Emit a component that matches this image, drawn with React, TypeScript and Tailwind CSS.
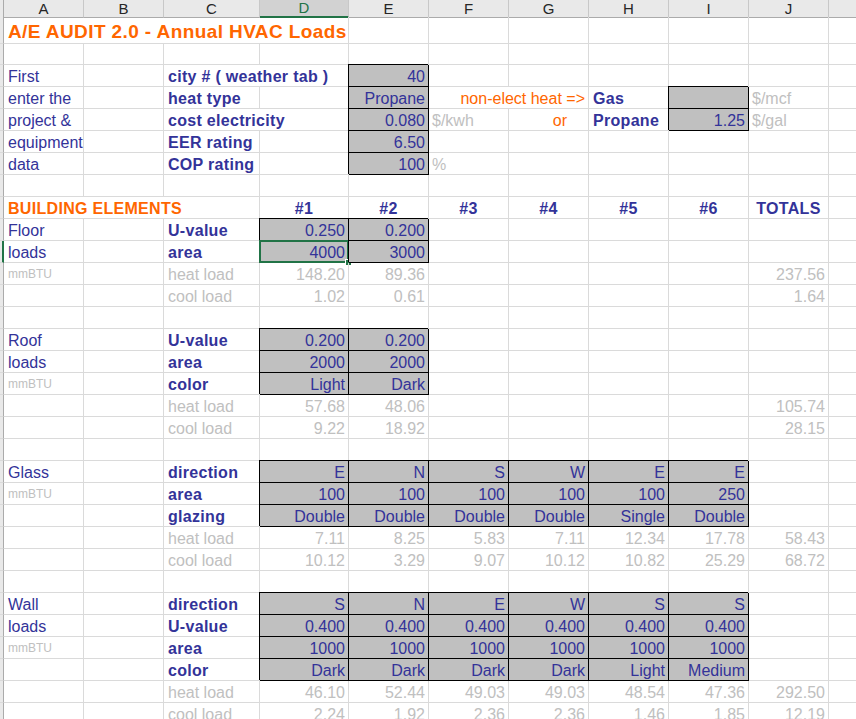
import React from "react";

type Kind =
  | "lbl"
  | "bold"
  | "head"
  | "orange"
  | "or"
  | "orangeB"
  | "title"
  | "unit"
  | "gray"
  | "num"
  | "small"
  | "input";

interface Cell {
  t?: string;
  k: Kind;
  span?: number;
  sel?: boolean;
}

interface Row {
  h: string;
  cells: Record<string, Cell>;
  mark?: boolean;
}

const COLS = ["A", "B", "C", "D", "E", "F", "G", "H", "I", "J", "K"];
const GROUP = ["D", "E", "F", "G", "H", "I"];
const GRID = "grid grid-cols-[4px_80px_80px_96px_89px_80px_80px_80px_80px_80px_80px_80px]";

const kindClass: Record<Kind, string> = {
  lbl: "justify-start pl-[4px] text-[#333399]",
  bold: "justify-start pl-[4px] font-bold tracking-[0.3px] text-[#333399]",
  head: "justify-center font-bold tracking-[0.3px] text-[#333399]",
  orange: "justify-end pr-[3px] text-[#ff6600]",
  or: "justify-end pr-[21px] text-[#ff6600]",
  orangeB: "justify-start pl-[4px] font-bold tracking-[0.3px] text-[#ff6600]",
  title: "justify-start pl-[4px] pb-[2px] text-[19px] font-bold tracking-[0.4px] text-[#ff6600]",
  unit: "justify-start pl-[3px] text-[#c0c0c0]",
  gray: "justify-start pl-[4px] text-[#c0c0c0]",
  num: "justify-end pr-[3px] text-[#c0c0c0]",
  small: "justify-start pl-[4px] pb-[1px] text-[12px] text-[#c0c0c0]",
  input: "justify-end pr-[3px] bg-[#c0c0c0] text-[#333399] shadow-[-1px_-1px_0_0_#000]",
};

const grp = (k: Kind, vals: string[]): Record<string, Cell> =>
  Object.fromEntries(vals.map((v, i) => [GROUP[i], { t: v, k }]));

const R = (cells: Record<string, Cell>, extra?: Partial<Row>): Row => ({
  h: "h-[22px]",
  cells,
  ...extra,
});

const L = (t: string): Cell => ({ t, k: "lbl" });
const B = (t: string): Cell => ({ t, k: "bold" });
const G = (t: string): Cell => ({ t, k: "gray" });
const S: Cell = { t: "mmBTU", k: "small" };

const rows: Row[] = [
  { h: "h-[27px]", cells: { A: { t: "A/E AUDIT 2.0 - Annual HVAC Loads", k: "title", span: 4 } } },
  { h: "h-[21px]", cells: {} },
  R({ A: L("First"), C: { t: "city # ( weather tab )", k: "bold", span: 2 }, E: { t: "40", k: "input" } }),
  R({
    A: L("enter the"),
    C: B("heat type"),
    E: { t: "Propane", k: "input" },
    F: { t: "non-elect heat =>", k: "orange", span: 2 },
    H: B("Gas"),
    I: { t: "", k: "input" },
    J: { t: "$/mcf", k: "unit" },
  }),
  R({
    A: L("project &"),
    C: { t: "cost electricity", k: "bold", span: 2 },
    E: { t: "0.080", k: "input" },
    F: { t: "$/kwh", k: "unit" },
    G: { t: "or", k: "or" },
    H: B("Propane"),
    I: { t: "1.25", k: "input" },
    J: { t: "$/gal", k: "unit" },
  }),
  R({ A: L("equipment"), C: B("EER rating"), E: { t: "6.50", k: "input" } }),
  R({ A: L("data"), C: B("COP rating"), E: { t: "100", k: "input" }, F: { t: "%", k: "unit" } }),
  R({}),
  R({
    A: { t: "BUILDING ELEMENTS", k: "orangeB", span: 3 },
    ...grp("head", ["#1", "#2", "#3", "#4", "#5", "#6"]),
    J: { t: "TOTALS", k: "head" },
  }),
  // floor
  R({ A: L("Floor"), C: B("U-value"), ...grp("input", ["0.250", "0.200"]) }),
  R(
    { A: L("loads"), C: B("area"), D: { t: "4000", k: "input", sel: true }, E: { t: "3000", k: "input" } },
    { mark: true }
  ),
  R({ A: S, C: G("heat load"), ...grp("num", ["148.20", "89.36"]), J: { t: "237.56", k: "num" } }),
  R({ C: G("cool load"), ...grp("num", ["1.02", "0.61"]), J: { t: "1.64", k: "num" } }),
  R({}),
  // roof
  R({ A: L("Roof"), C: B("U-value"), ...grp("input", ["0.200", "0.200"]) }),
  R({ A: L("loads"), C: B("area"), ...grp("input", ["2000", "2000"]) }),
  R({ A: S, C: B("color"), ...grp("input", ["Light", "Dark"]) }),
  R({ C: G("heat load"), ...grp("num", ["57.68", "48.06"]), J: { t: "105.74", k: "num" } }),
  R({ C: G("cool load"), ...grp("num", ["9.22", "18.92"]), J: { t: "28.15", k: "num" } }),
  R({}),
  // glass
  R({ A: L("Glass"), C: B("direction"), ...grp("input", ["E", "N", "S", "W", "E", "E"]) }),
  R({ A: S, C: B("area"), ...grp("input", ["100", "100", "100", "100", "100", "250"]) }),
  R({ C: B("glazing"), ...grp("input", ["Double", "Double", "Double", "Double", "Single", "Double"]) }),
  R({
    C: G("heat load"),
    ...grp("num", ["7.11", "8.25", "5.83", "7.11", "12.34", "17.78"]),
    J: { t: "58.43", k: "num" },
  }),
  R({
    C: G("cool load"),
    ...grp("num", ["10.12", "3.29", "9.07", "10.12", "10.82", "25.29"]),
    J: { t: "68.72", k: "num" },
  }),
  R({}),
  // wall
  R({ A: L("Wall"), C: B("direction"), ...grp("input", ["S", "N", "E", "W", "S", "S"]) }),
  R({ A: L("loads"), C: B("U-value"), ...grp("input", ["0.400", "0.400", "0.400", "0.400", "0.400", "0.400"]) }),
  R({ A: S, C: B("area"), ...grp("input", ["1000", "1000", "1000", "1000", "1000", "1000"]) }),
  R({ C: B("color"), ...grp("input", ["Dark", "Dark", "Dark", "Dark", "Light", "Medium"]) }),
  R({
    C: G("heat load"),
    ...grp("num", ["46.10", "52.44", "49.03", "49.03", "48.54", "47.36"]),
    J: { t: "292.50", k: "num" },
  }),
  R({
    C: G("cool load"),
    ...grp("num", ["2.24", "1.92", "2.36", "2.36", "1.46", "1.85"]),
    J: { t: "12.19", k: "num" },
  }),
];

const spanClass: Record<number, string> = {
  1: "",
  2: "col-span-2",
  3: "col-span-3",
  4: "col-span-4",
};

const SheetRow = ({ row }: { row: Row }) => {
  const out: React.ReactNode[] = [];
  let skip = 0;
  COLS.forEach((col) => {
    if (skip > 0) {
      skip--;
      return;
    }
    const cell = row.cells[col];
    const span = cell?.span ?? 1;
    skip = span - 1;
    const isInput = cell?.k === "input";
    out.push(
      <div
        key={col}
        className={`relative flex items-end whitespace-nowrap border-r border-b leading-[18px] ${
          isInput ? "border-black" : "border-[#dadada]"
        } ${spanClass[span]} ${cell ? kindClass[cell.k] : ""}`}
      >
        {cell?.t}
        {cell?.sel && (
          <>
            <div className="absolute -left-[1px] -top-[1px] -right-[1px] -bottom-[1px] border-2 border-[#217346]" />
            <div className="absolute -right-[4px] -bottom-[4px] h-[7px] w-[7px] border border-white bg-[#217346]" />
          </>
        )}
      </div>
    );
  });
  return (
    <div className={`${GRID} ${row.h}`}>
      <div
        className={`border-b border-[#dadada] bg-[#e9e9e9] ${
          row.mark ? "border-r-2 border-r-[#217346]" : "border-r border-r-[#ababab]"
        }`}
      />
      {out}
    </div>
  );
};

export default function App() {
  return (
    <div
      className="h-[719px] w-[856px] overflow-hidden bg-white text-[16px]"
      style={{ fontFamily: '"Liberation Sans", Arial, sans-serif' }}
    >
      <div className={`${GRID} h-[17px] text-[15px] leading-[16px] text-[#262626]`}>
        <div className="border-b border-r border-[#ababab] bg-[#e9e9e9]" />
        {COLS.map((c) =>
          c === "D" ? (
            <div
              key={c}
              className="flex items-end justify-center border-b-2 border-r border-b-[#217346] border-r-[#c8c8c8] bg-[#d2d2d2] text-[#217346]"
            >
              {c}
            </div>
          ) : (
            <div
              key={c}
              className="flex items-end justify-center border-b border-r border-b-[#ababab] border-r-[#c8c8c8] bg-[#e9e9e9]"
            >
              {c === "K" ? "" : c}
            </div>
          )
        )}
      </div>
      {rows.map((row, i) => (
        <SheetRow key={i} row={row} />
      ))}
    </div>
  );
}
